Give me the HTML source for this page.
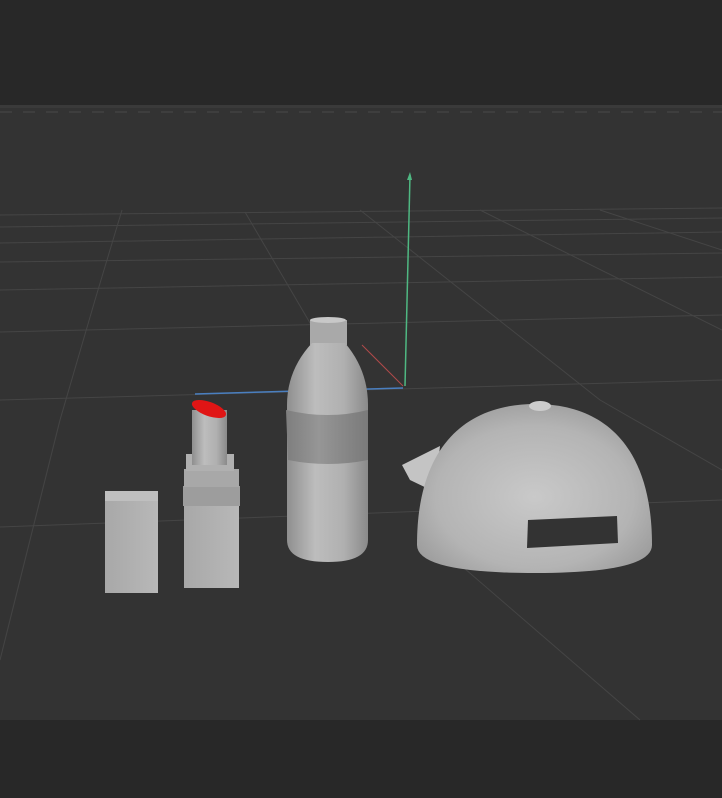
<!DOCTYPE html>
<html><head><style>
html,body{margin:0;padding:0;background:#333;width:722px;height:798px;overflow:hidden}
</style></head><body>
<svg width="722" height="798" viewBox="0 0 722 798" xmlns="http://www.w3.org/2000/svg">
<defs>
<linearGradient id="cyl" x1="0" x2="1" y1="0" y2="0">
<stop offset="0" stop-color="#8f8f8f"/><stop offset="0.35" stop-color="#bdbdbd"/><stop offset="0.7" stop-color="#b0b0b0"/><stop offset="1" stop-color="#8a8a8a"/></linearGradient>
<linearGradient id="band" x1="0" x2="1"><stop offset="0" stop-color="#7e7e7e"/><stop offset="0.4" stop-color="#969696"/><stop offset="1" stop-color="#7a7a7a"/></linearGradient>
<radialGradient id="dome" cx="0.5" cy="0.55" r="0.6"><stop offset="0" stop-color="#c9c9c9"/><stop offset="0.7" stop-color="#b4b4b4"/><stop offset="1" stop-color="#9c9c9c"/></radialGradient>
<linearGradient id="box" x1="0" x2="1"><stop offset="0" stop-color="#a8a8a8"/><stop offset="1" stop-color="#b8b8b8"/></linearGradient>
</defs>
<rect width="722" height="798" fill="#333"/>
<rect width="722" height="105" fill="#282828"/>
<rect y="105" width="722" height="3" fill="#3a3a3a"/>
<line x1="0" y1="112" x2="722" y2="112" stroke="#4a4a4a" stroke-width="1" stroke-dasharray="12,11"/>
<rect y="720" width="722" height="78" fill="#282828"/>
<g stroke="#454545" stroke-width="1" fill="none">
<path d="M0 215 L722 208"/><path d="M0 227 L722 218"/><path d="M0 243 L722 232"/><path d="M0 262 L722 253"/>
<path d="M0 290 L722 277"/><path d="M0 332 L722 315"/><path d="M0 400 L722 380"/><path d="M0 527 L722 500"/>
<path d="M122 210 L95 300 L60 420 L0 660"/><path d="M245 212 L320 340"/><path d="M360 210 L600 400 L722 470"/>
<path d="M480 210 L722 330"/><path d="M600 210 L722 250"/><path d="M420 530 L640 720"/>
</g>
<line x1="405" y1="386" x2="410" y2="175" stroke="#4fb882" stroke-width="1.5"/>
<path d="M407 180 L410 172 L412 180 Z" fill="#4fb882"/>
<line x1="403" y1="386" x2="362" y2="345" stroke="#b04a4a" stroke-width="1"/>
<line x1="403" y1="388" x2="195" y2="394" stroke="#4a7fc0" stroke-width="1.5"/>
<rect x="105" y="491" width="53" height="102" fill="url(#box)"/>
<rect x="105" y="491" width="53" height="10" fill="#bfbfbf"/>
<rect x="184" y="500" width="55" height="88" fill="url(#box)"/>
<rect x="183" y="486" width="57" height="20" fill="#9d9d9d"/>
<rect x="184" y="469" width="55" height="18" fill="#a8a8a8"/>
<rect x="186" y="454" width="48" height="17" fill="#b0b0b0"/>
<rect x="192" y="410" width="35" height="55" fill="url(#cyl)"/>
<ellipse cx="209" cy="409" rx="18" ry="7" transform="rotate(20 209 409)" fill="#e01515"/>
<rect x="310" y="320" width="37" height="25" fill="#a9a9a9"/>
<ellipse cx="328" cy="320" rx="18" ry="3" fill="#c8c8c8"/>
<path d="M312 343 L345 343 Q368 370 368 405 L368 540 Q368 562 328 562 Q287 562 287 540 L287 405 Q287 370 312 343 Z" fill="url(#cyl)"/>
<path d="M286 410 Q328 420 368 410 L368 460 Q328 468 288 460 Z" fill="url(#band)"/>
<path d="M440 446 L402 465 L410 480 L435 492 Z" fill="#c4c4c4"/>
<path d="M417 545 C417 445 467 404 535 404 C603 404 652 445 652 545 Q652 573 535 573 Q417 573 417 545 Z" fill="url(#dome)"/>
<ellipse cx="540" cy="406" rx="11" ry="5" fill="#cdcdcd"/>
<polygon points="528,520 617,516 618,543 527,548" fill="#333"/>
</svg>
</body></html>
